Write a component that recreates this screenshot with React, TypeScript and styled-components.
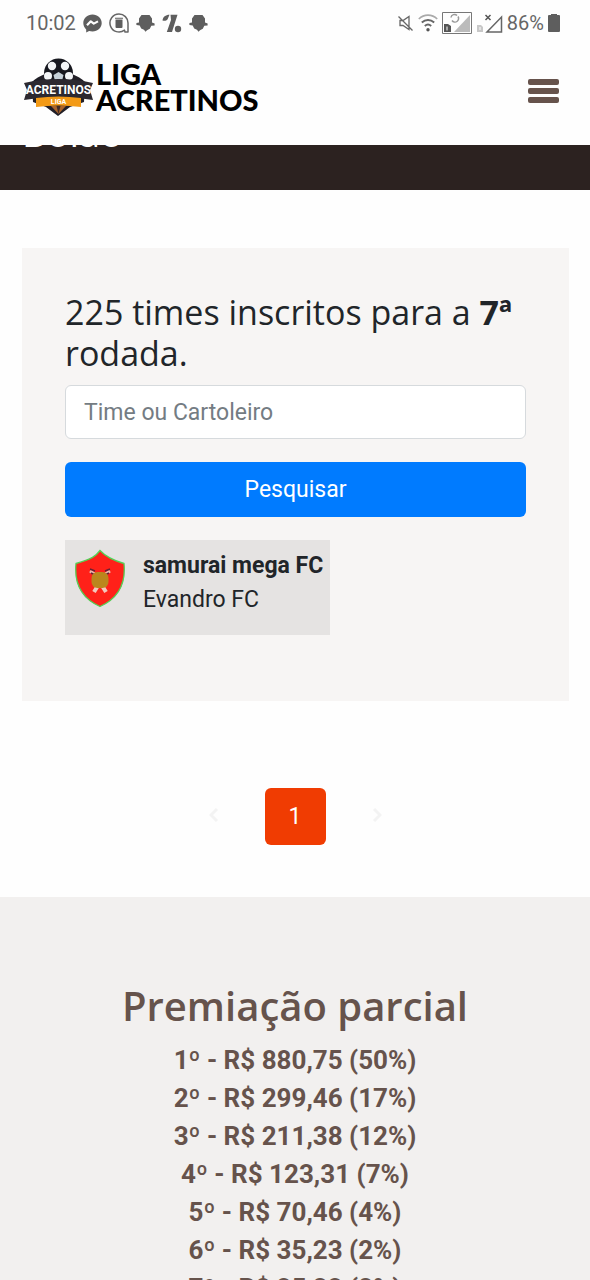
import React from "react";
import styled, { createGlobalStyle } from "styled-components";

const GlobalStyle = createGlobalStyle`
  *, *::before, *::after { box-sizing: border-box; }
  body {
    margin: 0;
    background: #fefefe;
    color: #212529;
    font-family: Roboto, sans-serif;
    font-size: 23px;
    line-height: 34px;
  }
  h1, h2, p, ol, ul { margin: 0; padding: 0; }
`;

const Screen = styled.div`
  display: flex;
  flex-direction: column;
  height: 100vh;
  overflow: hidden;
`;

const Top = styled.div`
  position: relative;
  z-index: 1;
  flex: none;
  background: #fefefe;
`;

const StatusBar = styled.div`
  display: flex;
  justify-content: space-between;
  align-items: center;
  height: 46px;
  padding: 0 30px 0 26px;
  color: #666;
  font-size: 20px;
`;

const StatusGroup = styled.div<{ $gap: number }>`
  display: flex;
  align-items: center;
  gap: ${(p) => p.$gap}px;

  svg { display: block; flex: none; }
`;

const Header = styled.header`
  display: flex;
  justify-content: space-between;
  align-items: flex-start;
  height: 99px;
  padding: 12px 31px 0 24px;
`;

const Brand = styled.a`
  display: flex;
  align-items: center;
  gap: 2px;
  color: #000;
  text-decoration: none;
`;

const BrandName = styled.span`
  font: 900 29px/26px Lato, sans-serif;
`;

const MenuButton = styled.button`
  display: flex;
  padding: 21px 0 0;
  border: 0;
  background: none;
  color: #66534c;
`;

const Banner = styled.div`
  display: flex;
  flex: none;
  align-items: center;
  height: 105px;
  margin-top: -60px;
  padding: 0 22px 12px;
  background: #2c2220;
`;

const BannerTitle = styled.h1`
  color: #fff;
  font: 400 38px/50px "Open Sans", sans-serif;
`;

const Card = styled.section`
  display: flex;
  flex: none;
  flex-direction: column;
  align-items: flex-start;
  margin: 58px 21px 0 22px;
  padding: 44px 43px 66px;
  background: #f7f5f4;
`;

const CardTitle = styled.h2`
  margin-bottom: 11px;
  font: 400 34px/41px "Open Sans", sans-serif;
`;

const SearchForm = styled.form`
  display: flex;
  flex-direction: column;
  gap: 23px;
  width: 100%;
  margin-bottom: 23px;
`;

const SearchInput = styled.input`
  width: 100%;
  height: 54px;
  padding: 0 18px;
  border: 1px solid #d6dadd;
  border-radius: 6px;
  background: #fff;
  font: inherit;

  &::placeholder { color: #747c83; opacity: 1; }
`;

const SearchButton = styled.button`
  height: 55px;
  border: 0;
  border-radius: 6px;
  background: #007bff;
  color: #fff;
  font: inherit;
`;

const Team = styled.article`
  display: flex;
  gap: 16px;
  height: 95px;
  padding: 9px 7px 0 8px;
  background: #e5e3e2;
`;

const Pagination = styled.nav`
  display: flex;
  flex: none;
  justify-content: center;
  align-items: center;
  gap: 46px;
  margin: 87px 0 52px;
`;

const PageArrow = styled.button`
  display: flex;
  padding: 0 0 4px;
  border: 0;
  background: none;
  color: #f3f3f3;
`;

const PageNumber = styled.button`
  width: 61px;
  height: 57px;
  border: 0;
  border-radius: 6px;
  background: #f03c02;
  color: #fff;
  font: inherit;
`;

const Prizes = styled.section`
  flex: 1 0 auto;
  padding: 84px 22px 0;
  background: #f2f0ef;
  color: #66534c;
  text-align: center;
`;

const PrizesTitle = styled.h2`
  margin-bottom: 10px;
  font: 600 40px/50px "Open Sans", sans-serif;
`;

const PrizeList = styled.ol`
  list-style: none;
  font-size: 26px;
  font-weight: 700;
  line-height: 38px;
`;

const prizes = [
  "1º - R$ 880,75 (50%)",
  "2º - R$ 299,46 (17%)",
  "3º - R$ 211,38 (12%)",
  "4º - R$ 123,31 (7%)",
  "5º - R$ 70,46 (4%)",
  "6º - R$ 35,23 (2%)",
  "7º - R$ 35,23 (2%)",
];

const MessengerIcon = () => (
  <svg width="19" height="19" viewBox="0 0 19 19">
    <path d="M9.500 .5C4.300.5.300 4.200.300 9.100c0 2.600 1.100 4.800 2.900 6.300v3l2.900-1.300c1.100.3 2.200.5 3.400.5 5.200 0 9.200-3.700 9.200-8.500S14.700.5 9.500.5z" fill="#5e5e5e" />
    <path d="M4 11.300 7.800 7.300l3 2.300L15 7.400" fill="none" stroke="#fff" strokeWidth="2.200" strokeLinejoin="round" />
  </svg>
);

const DeletedChatIcon = () => (
  <svg width="20" height="20" viewBox="0 0 20 20" fill="none" stroke="#666" strokeWidth="1.500">
    <path d="M10 1a9 9 0 1 0 5.500 16.100l.5 1.900h3V10a9 9 0 0 0-9-9z" strokeLinejoin="round" />
    <path d="M6.500 6.500h7V14a1 1 0 0 1-1 1h-5a1 1 0 0 1-1-1zM6 4.800h8v1H6z" fill="#5e5e5e" stroke="none" />
  </svg>
);

const FaceIcon = () => (
  <svg width="19" height="19" viewBox="0 0 19 19" fill="#5e5e5e">
    <path d="M3 4.500 5.500 1h8L16 4.500v4l2.600.9v2l-3.300.4-1.500 3-2.800 1.400-1.500 1.500L8 15.800l-2.800-1.400-1.500-3-3.300-.4v-2L3 8.500z" />
  </svg>
);

const PercentIcon = () => (
  <svg width="20" height="19" viewBox="0 0 20 19" fill="#5e5e5e">
    <path d="M.5 6.500C1 3 3.500.8 7.500.8L5.600 5.200C4.200 7 2.500 7.200.500 6.500zM8.500.8h7L10 18H4.800L9 6z" />
    <circle cx="16" cy="15" r="3.200" />
  </svg>
);

const MutedIcon = () => (
  <svg width="17" height="17" viewBox="0 0 17 17" fill="none" stroke="#666" strokeWidth="1.300">
    <path d="M3 5.500h3l6-4v13l-6-4H3zM1.500 1.500l14 14" />
  </svg>
);

const WifiIcon = () => (
  <svg width="20" height="18" viewBox="0 0 20 18" fill="none">
    <path d="M.8 5C6-.2 14-.2 19.200 5" stroke="#aaa" strokeWidth="1.600" />
    <path d="M3.800 8.500c3.700-3.400 8.700-3.400 12.400 0M6.800 12c1.900-1.700 4.500-1.700 6.400 0" stroke="#666" strokeWidth="1.900" />
    <circle cx="10" cy="15.700" r="1.700" fill="#555" />
  </svg>
);

const SimOneIcon = () => (
  <svg width="30" height="22" viewBox="0 0 30 22">
    <path d="M.5.5h29v21H.5z" fill="none" stroke="#777" />
    <path d="M28 3v17H12z" fill="#bbb" />
    <path d="M2 12h4l3 2v6H2z" fill="#555" />
    <path d="M5 14.500v4" stroke="#fff" />
    <path d="M9 5.500a3.500 3.500 0 0 1 6-2M16 4.500a3.500 3.500 0 0 1-6 4" fill="none" stroke="#999" strokeWidth="1.500" />
  </svg>
);

const SimTwoIcon = () => (
  <svg width="27" height="19" viewBox="0 0 27 19">
    <path d="M1 11h4l2 2v5H1z" fill="#c8c8c8" />
    <path d="M4 13v3" stroke="#fff" />
    <path d="M25.500 3v15H11z" fill="none" stroke="#666" strokeWidth="1.500" />
    <path d="m9.500 1 5 5m0-5-5 5" stroke="#555" strokeWidth="1.500" />
  </svg>
);

const BatteryIcon = () => (
  <svg width="12" height="18" viewBox="0 0 12 18" fill="#5e5e5e">
    <path d="M3 0h6v1h2a1 1 0 0 1 1 1v15a1 1 0 0 1-1 1H1a1 1 0 0 1-1-1V2a1 1 0 0 1 1-1h2z" />
  </svg>
);

const LogoBadge = () => (
  <svg width="70" height="58" viewBox="0 0 70 58" aria-hidden="true">
    <path d="M8 24q5-5 13-8h27q8 3 13 8l-1 20-14 5-12 9-12-9-13-5z" fill="#211f27" />
    <circle cx="34.500" cy="15" r="14.500" fill="#17181f" />
    <g fill="#f3f5f7">
      <circle cx="28" cy="8" r="4.200" />
      <circle cx="41" cy="8" r="4.200" />
      <circle cx="24" cy="18" r="4" />
      <circle cx="45" cy="18" r="4" />
      <path d="m34.500 14 5 3-1.500 6h-7l-1.500-6z" fill="#c5d0d8" />
    </g>
    <path d="M27 48h15l-7.500 8z" fill="#a9632a" />
    <path d="m32.500 48 2 8 2-8z" fill="#412b24" />
    <path d="M0 25Q34.500 17 69 25l-3 7 3 10Q34.500 36 0 42l3-10z" fill="#2c2930" />
    <text x="34.500" y="36" fill="#fff" fontFamily="Roboto, sans-serif" fontSize="12" fontWeight="700" textAnchor="middle">ACRETINOS</text>
    <path d="M12 40q22.500-3 45 0v9q-22.500-3-45 0z" fill="#f39a16" />
    <text x="34.500" y="46" fill="#fff" fontFamily="Roboto, sans-serif" fontSize="7" fontWeight="700" textAnchor="middle">LIGA</text>
  </svg>
);

const TeamShield = () => (
  <svg width="54" height="60" viewBox="0 0 54 60" aria-hidden="true">
    <path d="M27 1.500Q35 10 51 14.500C53 35 46 49 27 57.500 8 49 1 35 3 14.500 19 10 23 7 27 1.500z" fill="#ff2119" stroke="#55cf55" strokeWidth="1.300" />
    <path d="m21 43 5-8M33 43l-5-8" stroke="#f3c9bd" strokeWidth="4" />
    <path d="m17 22 6 4m14-4-6 4" stroke="#e9b9ad" strokeWidth="3" />
    <path d="m17 20 5 2m15-2-5 2M18 24l4 2m14-2-4 2" stroke="#623" strokeWidth="1.500" />
    <rect x="18.500" y="23" width="17" height="16" rx="6" fill="#bb861d" />
  </svg>
);

const Chevron = ({ d }: { d: string }) => (
  <svg width="10" height="14" viewBox="0 0 10 14" fill="none" stroke="currentColor" strokeWidth="3">
    <path d={d} />
  </svg>
);

export default function App() {
  return (
    <Screen>
      <GlobalStyle />
      <Top>
        <StatusBar>
          <StatusGroup $gap={7}>
            <span>10:02</span>
            <MessengerIcon />
            <DeletedChatIcon />
            <FaceIcon />
            <PercentIcon />
            <FaceIcon />
          </StatusGroup>
          <StatusGroup $gap={4}>
            <MutedIcon />
            <WifiIcon />
            <SimOneIcon />
            <SimTwoIcon />
            <span>86%</span>
            <BatteryIcon />
          </StatusGroup>
        </StatusBar>
        <Header>
          <Brand href="#">
            <LogoBadge />
            <BrandName>
              LIGA
              <br />
              ACRETINOS
            </BrandName>
          </Brand>
          <MenuButton type="button" aria-label="Menu">
            <svg width="31" height="25" viewBox="0 0 31 25" fill="currentColor">
              <rect width="31" height="6" rx="2" />
              <rect y="9" width="31" height="6" rx="2" />
              <rect y="18" width="31" height="6" rx="2" />
            </svg>
          </MenuButton>
        </Header>
      </Top>

      <Banner>
        <BannerTitle>Bolão</BannerTitle>
      </Banner>

      <Card>
        <CardTitle>
          225 times inscritos para a <b>7ª</b> rodada.
        </CardTitle>
        <SearchForm onSubmit={(e) => e.preventDefault()}>
          <SearchInput type="text" aria-label="Time ou Cartoleiro" placeholder="Time ou Cartoleiro" />
          <SearchButton type="submit">Pesquisar</SearchButton>
        </SearchForm>
        <Team>
          <TeamShield />
          <div>
            <p>
              <b>samurai mega FC</b>
            </p>
            <p>Evandro FC</p>
          </div>
        </Team>
      </Card>

      <Pagination aria-label="Páginas">
        <PageArrow type="button" aria-label="Anterior">
          <Chevron d="M8 1 2 7l6 6" />
        </PageArrow>
        <PageNumber type="button">1</PageNumber>
        <PageArrow type="button" aria-label="Próxima">
          <Chevron d="m2 1 6 6-6 6" />
        </PageArrow>
      </Pagination>

      <Prizes>
        <PrizesTitle>Premiação parcial</PrizesTitle>
        <PrizeList>
          {prizes.map((prize) => (
            <li key={prize}>{prize}</li>
          ))}
        </PrizeList>
      </Prizes>
    </Screen>
  );
}
